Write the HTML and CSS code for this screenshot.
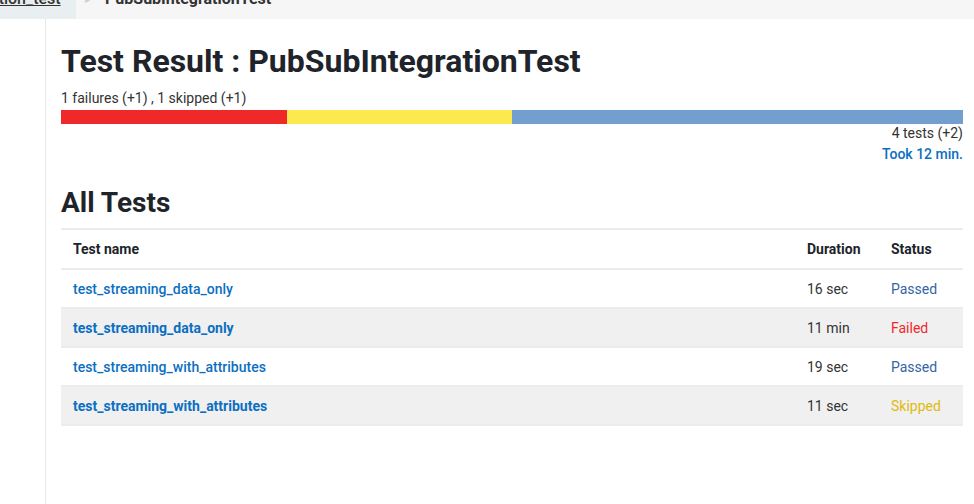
FILE: index.html
```html
<!DOCTYPE html>
<html lang="en">
<head>
    <meta charset="UTF-8">
    <title>Test Result : PubSubIntegrationTest</title>
    <link rel="stylesheet" href="styles.css">
</head>
<body>
    <div class="breadcrumbs">
        <a class="crumb crumb-parent" href="#">ation_test</a>
        <span class="crumb-sep">&#9656;</span>
        <span class="crumb crumb-current">PubSubIntegrationTest</span>
    </div>

    <div class="page">
        <div class="side-panel"></div>

        <div class="main-panel">
            <h1 class="result-title">Test Result : PubSubIntegrationTest</h1>
            <div class="summary">1 failures (+1) , 1 skipped (+1)</div>

            <div class="result-bar">
                <div class="bar-fail"></div>
                <div class="bar-skip"></div>
                <div class="bar-pass"></div>
            </div>

            <div class="totals">
                <div>4 tests (+2)</div>
                <a href="#" class="took">Took 12 min.</a>
            </div>

            <h2 class="section-title">All Tests</h2>

            <table class="test-table">
                <thead>
                    <tr>
                        <th class="col-name">Test name</th>
                        <th class="col-duration">Duration</th>
                        <th class="col-status">Status</th>
                    </tr>
                </thead>
                <tbody>
                    <tr>
                        <td><a href="#" class="test-link">test_streaming_data_only</a></td>
                        <td>16 sec</td>
                        <td class="status-passed">Passed</td>
                    </tr>
                    <tr class="row-alt">
                        <td><a href="#" class="test-link strong">test_streaming_data_only</a></td>
                        <td>11 min</td>
                        <td class="status-failed">Failed</td>
                    </tr>
                    <tr>
                        <td><a href="#" class="test-link">test_streaming_with_attributes</a></td>
                        <td>19 sec</td>
                        <td class="status-passed">Passed</td>
                    </tr>
                    <tr class="row-alt">
                        <td><a href="#" class="test-link strong">test_streaming_with_attributes</a></td>
                        <td>11 sec</td>
                        <td class="status-skipped">Skipped</td>
                    </tr>
                </tbody>
            </table>
        </div>
    </div>
</body>
</html>
```

FILE: styles.css
```css
* {
    box-sizing: border-box;
}

body {
    margin: 0;
    font-family: Roboto, "Liberation Sans", sans-serif;
    font-size: 14px;
    color: #333;
    background: white;
}

a {
    text-decoration: none;
}

.breadcrumbs {
    display: flex;
    align-items: flex-start;
    height: 19px;
    overflow: hidden;
    background: #f6f6f6;
}

.crumb {
    margin-top: -9px;
    line-height: 15px;
    font-size: 16px;
    font-weight: 500;
    color: #333;
}

.crumb-parent {
    display: block;
    width: 77px;
    height: 28px;
    background: #e9eef1;
    text-decoration: underline;
    text-indent: -9px;
    white-space: nowrap;
    overflow: hidden;
    margin-left: -1px;
}

.crumb-sep {
    margin: -6px 0 0 9px;
    font-size: 10px;
    line-height: 12px;
    color: #d0d0d0;
}

.crumb-current {
    margin-left: 15px;
    font-weight: 700;
}

.page {
    display: flex;
    min-height: 485px;
}

.side-panel {
    width: 46px;
    border-right: 1px solid #e8e8e8;
}

.main-panel {
    flex: 1;
    padding: 0 11px 0 15px;
}

.result-title {
    margin: 23px 0 0;
    font-size: 32px;
    line-height: 38px;
    font-weight: 700;
    color: #20242a;
}

.summary {
    margin-top: 9px;
    font-size: 14px;
    line-height: 18px;
}

.result-bar {
    display: flex;
    height: 14px;
    margin-top: 3px;
}

.bar-fail {
    width: 25%;
    background: #ef2929;
}

.bar-skip {
    width: 25%;
    background: #fce94f;
}

.bar-pass {
    width: 50%;
    background: #729fcf;
}

.totals {
    text-align: right;
    line-height: 21px;
    margin-top: -1px;
}

.took {
    color: #0b6fc1;
    font-weight: 500;
}

.section-title {
    margin: 21px 0 0;
    font-size: 28px;
    line-height: 34px;
    font-weight: 700;
    color: #20242a;
}

.test-table {
    width: 100%;
    margin-top: 8px;
    border-collapse: collapse;
    border-top: 2px solid #e9edf1;
}

.test-table th,
.test-table td {
    padding: 9px 12px 7px;
    line-height: 21px;
    text-align: left;
    border-bottom: 2px solid #e9edf1;
}

.test-table th {
    font-weight: 700;
    color: #20242a;
    padding-top: 9px;
    padding-bottom: 8px;
}

.col-duration {
    width: 84px;
}

.col-status {
    width: 84px;
}

.row-alt td {
    background: #f0f0f0;
}

.test-link {
    color: #0b6fc1;
    font-weight: 500;
}

.test-link.strong {
    font-weight: 700;
}

.status-passed {
    color: #3465a4;
}

.status-failed {
    color: #ef2929;
}

.status-skipped {
    color: #dfb912;
}
```
